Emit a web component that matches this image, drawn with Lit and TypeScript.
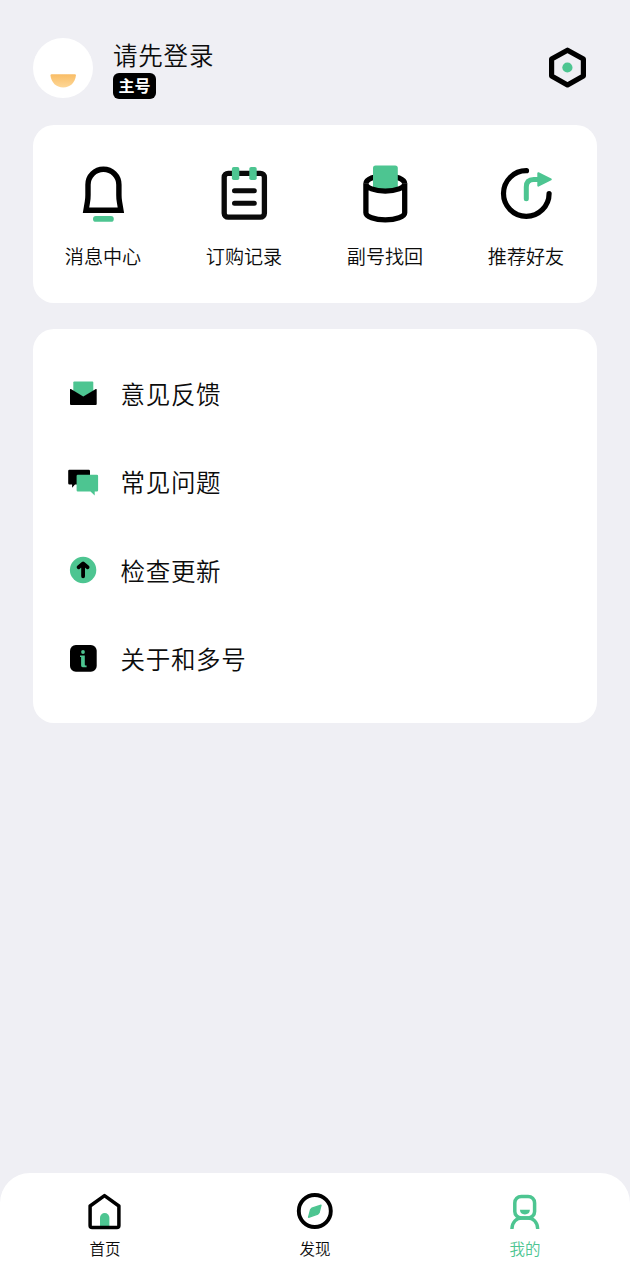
import { LitElement, html, css } from "lit";
import { customElement } from "lit/decorators.js";

const G = "#4dc591";

const icons = {
  bell: html`<svg width="60" height="64" viewBox="74 162 60 64" fill="none">
    <path d="M88 184.7a15.4 15.4 0 0 1 30.9 0V195q0 4 .6 7l1.400 8.200H86l1.400-8.200q.6-3 .6-7z" stroke="#000" stroke-width="5.4"/>
    <rect x="93" y="216" width="20.8" height="5.8" rx="2.9" fill=${G}/></svg>`,
  note: html`<svg width="60" height="64" viewBox="215 162 60 64" fill="none">
    <rect x="224.2" y="173.3" width="40.2" height="43.9" rx="4" stroke="#0a0a0a" stroke-width="5.3"/>
    <path d="M234.5 190.7h19.8M234.5 203.2h19.8" stroke="#0a0a0a" stroke-width="5" stroke-linecap="round"/>
    <rect x="231.9" y="166.9" width="7.4" height="13.2" rx="1.8" fill=${G}/>
    <rect x="249.3" y="166.9" width="7.4" height="13.2" rx="1.8" fill=${G}/></svg>`,
  cup: html`<svg width="60" height="64" viewBox="356 162 60 64" fill="none">
    <path d="M365.9 183.7a19.4 8 0 0 1 38.8 0" stroke="#000" stroke-width="5.3"/>
    <path d="M373 168.1a2.6 2.6 0 0 1 2.6-2.6h19.600a2.6 2.6 0 0 1 2.6 2.6v22H373z" fill=${G}/>
    <path d="M365.9 183.5a19.4 7.6 0 0 0 38.8 0v29.300c0 4-8.700 7.100-19.400 7.100s-19.400-3.100-19.400-7.100z" stroke="#000" stroke-width="5.3"/></svg>`,
  share: html`<svg width="60" height="64" viewBox="497 162 60 64" fill="none">
    <path d="M526.5 170.7a22.8 22.8 0 1 0 22.6 22.8" stroke="#000" stroke-width="5.2" stroke-linecap="round"/>
    <path d="M526.3 198.8V187q0-7.500 7.500-7.500h5" stroke=${G} stroke-width="5" stroke-linecap="round"/>
    <path d="M538.3 173.2l12.500 6.200-12.500 6.200z" fill=${G} stroke=${G} stroke-width="2" stroke-linejoin="round"/></svg>`,
  hex: html`<svg width="40" height="44" viewBox="548 46 40 44" fill="none">
    <path d="M567.5 50.2l15.900 8.900v17l-15.900 8.900-15.900-8.900v-17z" stroke="#000" stroke-width="5.2" stroke-linejoin="round"/>
    <circle cx="567.4" cy="67.5" r="5.1" fill=${G}/></svg>`,
  mouth: html`<svg width="60" height="60" viewBox="33 38 60 60">
    <defs><linearGradient id="m" x1="0" x2="0" y1="0" y2="1"><stop offset="0" stop-color="#f9bd66"/><stop offset="1" stop-color="#fdd797"/></linearGradient></defs>
    <path d="M51.6 74.300h23.200q1.200 0 1.100 1.300c-.7 7-5.700 12-12.700 12s-12-5-12.700-12q-.1-1.300 1.100-1.300z" fill="url(#m)"/></svg>`,
  mail: html`<svg width="34" height="34" viewBox="66 377 34 34">
    <path d="M73.3 382.600q0-1 1-1h18q1 0 1 1V391l-10 6-10-6z" fill=${G}/>
    <path d="M70 389.600q0-1 .9-.5l12.400 7.500 12.500-7.500q.9-.5.9.5V404q0 1-1 1H71q-1 0-1-1z"/></svg>`,
  chat: html`<svg width="34" height="34" viewBox="66 465 34 34">
    <path d="M68.2 471q0-1.200 1.200-1.200h19.400q1.200 0 1.200 1.200v13.500H75l-2.900 3.200v-3.200h-2.700q-1.200 0-1.200-1.200z"/>
    <path d="M76.6 475.900q0-1.200 1.200-1.200h19.100q1.200 0 1.200 1.200v14.300q0 1.200-1.200 1.200h-2.200v4l-4.200-4H77.800q-1.200 0-1.200-1.200z" fill=${G}/></svg>`,
  up: html`<svg width="34" height="34" viewBox="66 554 34 34" fill="none">
    <circle cx="83.1" cy="570" r="13.2" fill=${G}/>
    <path d="M83.1 564v12.300M78.600 567.200l4.500-3.800 4.500 3.800" stroke="#000" stroke-width="3.8" stroke-linecap="round" stroke-linejoin="round"/></svg>`,
  info: html`<svg width="34" height="34" viewBox="66 642 34 34">
    <rect x="70" y="645" width="26.7" height="26.7" rx="5.8"/>
    <circle cx="83" cy="652" r="1.9" fill=${G}/>
    <path d="M80 655.400h4.800v9.400q0 .8.8.8h1v1.600h-3.900q-1.600 0-1.600-1.600V657H80z" fill=${G}/></svg>`,
  home: html`<svg width="40" height="40" viewBox="85 1191 40 40" fill="none">
    <path d="M100 1227v-9.300a4.700 4.700 0 0 1 9.400 0v9.300z" fill=${G}/>
    <path d="M104.5 1195.600l14.400 10.400v19.600q0 2-2 2H92.100q-2 0-2-2V1206z" stroke="#000" stroke-width="3.5" stroke-linejoin="round"/></svg>`,
  compass: html`<svg width="40" height="40" viewBox="295 1191 40 40" fill="none">
    <circle cx="314.8" cy="1211" r="16" stroke="#000" stroke-width="3.9"/>
    <path d="M321 1205.200l-1.900 7.400-1.300 1.500-9.200 3.200 2-7.600 1.300-1.500z" fill=${G} stroke=${G} stroke-width="1.4" stroke-linejoin="round"/></svg>`,
  user: html`<svg width="40" height="40" viewBox="505 1191 40 40" fill="none">
    <rect x="514.8" y="1196.4" width="19.8" height="21.6" rx="6.500" stroke=${G} stroke-width="3.5"/>
    <path d="M519.900 1209.800h10q-.3 4.600-5 4.600t-5-4.600z" fill=${G}/>
    <path d="M511.900 1229c.2-6.800 4.500-11 10-11h5.800c5.500 0 9.800 4.200 10 11" stroke=${G} stroke-width="3.4"/></svg>`,
};

@customElement("app-root")
export class AppRoot extends LitElement {
  static styles = css`
    :host {
      display: flex; flex-direction: column; box-sizing: border-box; height: 1280px;
      background: #efeff4; color: #0c0c0c;
      font-family: "Noto Sans CJK SC", sans-serif; font-weight: 350;
    }
    svg { display: block; flex: none; }
    header { display: flex; align-items: flex-start; padding: 38px 42px 0 33px; height: 125px; box-sizing: border-box; }
    .avatar { width: 60px; height: 60px; border-radius: 50%; background: #fff; margin-top: -0.5px; }
    .who { flex: 1; margin-left: 20px; display: flex; flex-direction: column; align-items: flex-start; }
    .name { font-size: 24.5px; letter-spacing: 0.8px; line-height: 33px; height: 35px; }
    .badge { background: #000; color: #fff; font-weight: 700; font-size: 16px; line-height: 25px; height: 26px; width: 43px; text-align: center; border-radius: 6px; }
    .gear { margin-top: 8px; }
    .card { margin: 0 33px; background: #fff; border-radius: 21px; box-sizing: border-box; }
    .grid { display: grid; grid-template-columns: repeat(4, 1fr); height: 178px; padding-top: 37px; }
    .cell { display: flex; flex-direction: column; align-items: center; width: 140px; font-size: 19.1px; line-height: 28px; gap: 16px; }
    .cell svg { margin-left: 1px; margin-right: -1px; }
    .list { margin-top: 26px; height: 394px; padding: 21px 33px; }
    .row { display: flex; align-items: center; gap: 20.5px; height: 88.3px; font-size: 24.5px; letter-spacing: 0.7px; }
    .row span { margin-top: -1px; }
    nav { margin-top: auto; height: 107px; box-sizing: border-box; padding-top: 18px; background: #fff; border-radius: 30px 30px 0 0; display: grid; grid-template-columns: repeat(3, 1fr); }
    .tab { display: flex; flex-direction: column; align-items: center; gap: 5px; font-size: 15.5px; line-height: 24px; }
    .active { color: #4dc591; }
  `;

  render() {
    const cell = (i: unknown, t: string) => html`<div class="cell">${i}<span>${t}</span></div>`;
    const row = (i: unknown, t: string) => html`<div class="row">${i}<span>${t}</span></div>`;
    const tab = (i: unknown, t: string, c = "") => html`<div class="tab ${c}">${i}<span>${t}</span></div>`;
    return html`
      <header>
        <div class="avatar">${icons.mouth}</div>
        <div class="who"><div class="name">请先登录</div><div class="badge">主号</div></div>
        <div class="gear">${icons.hex}</div>
      </header>
      <section class="card grid">
        ${cell(icons.bell, "消息中心")}${cell(icons.note, "订购记录")}
        ${cell(icons.cup, "副号找回")}${cell(icons.share, "推荐好友")}
      </section>
      <section class="card list">
        ${row(icons.mail, "意见反馈")}${row(icons.chat, "常见问题")}
        ${row(icons.up, "检查更新")}${row(icons.info, "关于和多号")}
      </section>
      <nav>${tab(icons.home, "首页")}${tab(icons.compass, "发现")}${tab(icons.user, "我的", "active")}</nav>
    `;
  }
}
